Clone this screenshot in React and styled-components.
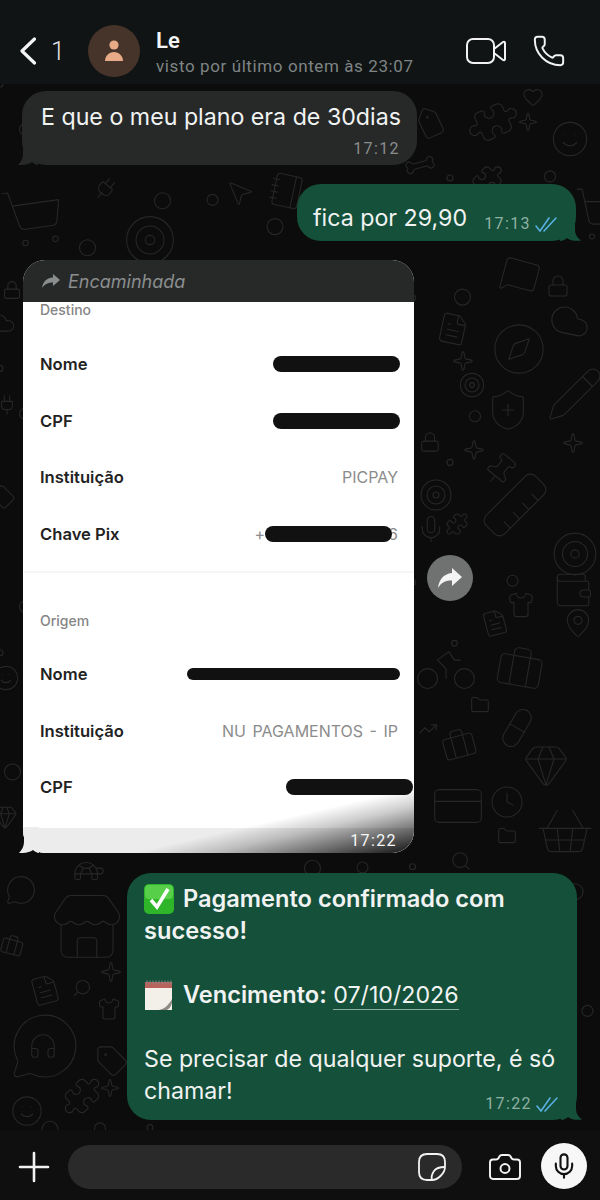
import React from "react";
import styled, { createGlobalStyle } from "styled-components";
import {
  Bike, Bone, Briefcase, Camera, Clock, Cloud, Compass, CreditCard, FileText, Folder, Gem,
  Headphones, Heart, Lock, MapPin, MessageCircle, MessageSquare, Mic, MousePointer2, Notebook, Pencil,
  Phone, Pill, Pin, Plug, Puzzle, Ruler, Search, ShieldPlus, Shirt, ShoppingBasket, ShoppingCart,
  Smile, Sparkle, Store, Tag, Target, TrendingUp, Turtle, Wallet,
} from "lucide-react";

const GlobalStyle = createGlobalStyle`
  html, body {
    margin: 0;
    padding: 0;
    background: #0c0c0c;
  }
`;

const Screen = styled.div`
  display: flex;
  flex-direction: column;
  width: 600px;
  height: 1200px;
  overflow: hidden;
  background: #0c0c0c;
  color: #f2f2f2;
  font-family: Inter, "Liberation Sans", sans-serif;
`;

const Header = styled.header`
  display: flex;
  align-items: center;
  flex: none;
  height: 84px;
  padding: 18px 34px 0 20px;
  box-sizing: border-box;
  background: #101414;
`;

const BackButton = styled.div`
  display: flex;
  align-items: center;
  gap: 15px;
  width: 68px;
  font-family: Roboto, sans-serif;
  font-size: 25px;
  font-weight: 300;
  color: #e4e4e4;
`;

const Avatar = styled.div`
  display: flex;
  align-items: center;
  justify-content: center;
  width: 52px;
  height: 52px;
  border-radius: 50%;
  background: #46342a;
`;

const Contact = styled.div`
  display: flex;
  flex-direction: column;
  flex: 1;
  margin-left: 16px;
`;

const ContactName = styled.div`
  height: 26px;
  font-family: Roboto, sans-serif;
  font-size: 22px;
  font-weight: 600;
  line-height: 28px;
  color: #f4f4f4;
`;

const LastSeen = styled.div`
  margin-top: 3px;
  font-family: Roboto, sans-serif;
  font-size: 17px;
  line-height: 20px;
  letter-spacing: 0.6px;
  white-space: nowrap;
  color: #7f8484;
`;

const HeaderActions = styled.div`
  display: flex;
  align-items: center;
  gap: 26px;
`;

const Chat = styled.main`
  position: relative;
  display: flex;
  flex-direction: column;
  flex: 1;
  padding-top: 7px;
  overflow: hidden;
`;

const Wallpaper = styled.svg`
  position: absolute;
  top: 0;
  left: 0;
  color: #262727;
`;

const Bubble = styled.div`
  position: relative;
  box-sizing: border-box;
  border-radius: 24px;
  background: ${p => (p.$sent ? "#14503a" : "#272929")};
  font-size: 23.2px;
  line-height: 32px;
  color: #f1f3f2;
`;

const ReceivedBubble = styled(Bubble)`
  align-self: flex-start;
  width: 395px;
  margin-left: 22px;
  padding: 10px 17px 6px 19px;
  white-space: nowrap;
`;

const PriceBubble = styled(Bubble)`
  display: flex;
  align-items: flex-end;
  justify-content: space-between;
  align-self: flex-end;
  width: 279px;
  height: 57px;
  margin: 19px 24px 0 0;
  padding: 11px 17px 7px 16px;
`;

const ConfirmBubble = styled(Bubble)`
  align-self: flex-end;
  width: 450px;
  height: 247px;
  margin: 20px 23px 0 0;
  padding: 10px 12px 0 17px;
`;

const Tail = styled.svg`
  position: absolute;
  bottom: 0;
  ${p => (p.$right ? "right: -8px;" : "left: -8px;")}
`;

const Meta = styled.div`
  display: flex;
  align-items: center;
  justify-content: flex-end;
  gap: 4px;
  margin-top: ${p => p.$gap || 0}px;
  font-family: Roboto, sans-serif;
  font-size: 16px;
  line-height: 20px;
  letter-spacing: 1.4px;
  color: ${p => (p.$sent ? "#8fb1a2" : "#8a8d8d")};
`;

const ConfirmMeta = styled(Meta)`
  position: absolute;
  right: 17px;
  bottom: 6px;
`;

const Strong = styled.b`
  font-size: 23.6px;
  font-weight: 600;
`;

const EmojiLine = styled.div`
  display: flex;
  align-items: center;
  gap: 9px;
  height: 32px;
`;

const DateLink = styled.span`
  border-bottom: 1px solid #8fb0a0;
  line-height: 24px;
`;

const Spacer = styled.div`
  height: 32px;
`;

const ForwardedCard = styled.section`
  position: relative;
  align-self: flex-start;
  width: 391px;
  height: 593px;
  margin: 19px 0 0 23px;
  border-radius: 22px;
  background: #ffffff;
`;

const ForwardedHead = styled.div`
  display: flex;
  align-items: center;
  gap: 8px;
  height: 42px;
  padding: 0 0 0 19px;
  border-radius: 22px 22px 0 0;
  background: #272929;
  font-size: 18px;
  font-style: italic;
  color: #8b8e8e;
`;

const Receipt = styled.div`
  position: relative;
  height: 526px;
  padding: 0 16px 0 17px;
  overflow: hidden;
  background: #ffffff;
`;

const SectionLabel = styled.div`
  margin-bottom: ${p => p.$gap}px;
  font-size: 14px;
  font-weight: 500;
  line-height: 16px;
  color: #858585;
`;

const Row = styled.div`
  display: flex;
  align-items: center;
  justify-content: space-between;
  height: 56.5px;
`;

const RowLabel = styled.span`
  font-size: 16.6px;
  font-weight: 600;
  color: #222222;
`;

const RowValue = styled.span`
  display: flex;
  align-items: center;
  font-size: 16px;
  word-spacing: 2px;
  color: #8c8c8c;
`;

const Redaction = styled.span`
  position: relative;
  display: block;
  width: ${p => p.$width}px;
  height: ${p => p.$height || 16}px;
  margin-right: ${p => p.$shift || 0}px;
  border-radius: 8px;
  background: #111111;
`;

const Divider = styled.div`
  height: 2px;
  margin: 9px -16px 40px -16px;
  background: #f5f5f5;
`;

const ImageFoot = styled.div`
  position: relative;
  display: flex;
  align-items: center;
  justify-content: flex-end;
  height: 25px;
  padding-right: 17px;
  border-radius: 0 0 22px 22px;
  background: #ececec;
  font-family: Roboto, sans-serif;
  font-size: 16px;
  letter-spacing: 1.4px;
  color: #f6f6f6;
`;

const Shade = styled.div`
  position: absolute;
  left: 0;
  right: 0;
  bottom: 0;
  height: 65px;
  border-radius: 0 0 22px 22px;
  background: linear-gradient(167deg, rgba(0, 0, 0, 0) 58%, rgba(0, 0, 0, 0.2) 70%, rgba(0, 0, 0, 0.92) 100%);
`;

const FootTime = styled.span`
  position: relative;
`;

const ForwardButton = styled.div`
  position: absolute;
  top: 295px;
  left: calc(100% + 13px);
  display: flex;
  align-items: center;
  justify-content: center;
  width: 46px;
  height: 46px;
  border-radius: 50%;
  background: #707171;
`;

const Composer = styled.footer`
  display: flex;
  align-items: center;
  flex: none;
  height: 70px;
  padding: 4px 13px 0 18px;
  box-sizing: border-box;
  background: #0f0f0f;
`;

const InputField = styled.div`
  display: flex;
  align-items: center;
  justify-content: flex-end;
  flex: 1;
  height: 44px;
  margin: 0 25px 0 18px;
  padding-right: 16px;
  border-radius: 22px;
  background: #2a2a2a;
`;

const MicButton = styled.div`
  display: flex;
  align-items: center;
  justify-content: center;
  width: 46px;
  height: 46px;
  margin: -2px 0 0 18px;
  border-radius: 50%;
  background: #f7f7f7;
`;

// doodles of the chat wallpaper: icon, x, y, size, rotation
const doodles = [
  [ShoppingCart, 0, 100, 66, -8], [Plug, 92, 92, 26, 40], [Target, 122, 128, 56, 0],
  [MousePointer2, 225, 94, 30, 0], [Notebook, 268, 88, 38, 12],
  [Bone, 405, 66, 30, 30], [Tag, 415, 25, 32, 20], [Puzzle, 470, 15, 46, 20], [Sparkle, 518, 28, 20, 0],
  [Smile, 550, 35, 40, 0], [Heart, 522, 2, 22, 0], [Puzzle, 470, 80, 34, 0], [ShoppingCart, 572, 100, 60, 0],
  [MessageSquare, 500, 172, 40, 15], [Lock, 546, 190, 24, 0], [Cloud, 548, 215, 44, 12],
  [FileText, 436, 228, 34, 12], [Sparkle, 452, 266, 22, 0], [Target, 458, 287, 28, 0],
  [Compass, 490, 236, 58, 0], [ShieldPlus, 485, 303, 46, 0], [Pencil, 545, 280, 60, 0],
  [Lock, 419, 347, 22, 0], [Sparkle, 463, 355, 22, 0], [Sparkle, 562, 348, 22, 0], [Pin, 482, 368, 36, 40],
  [Ruler, 478, 384, 74, 90], [Target, 418, 393, 36, 0], [Mic, 416, 430, 30, 0], [Puzzle, 445, 428, 24, 0],
  [Target, 550, 445, 50, 0], [Shirt, 507, 507, 28, 0], [FileText, 481, 525, 28, -15], [Wallet, 552, 485, 42, 0],
  [MapPin, 562, 523, 32, 0], [Bike, 412, 545, 68, 0], [Briefcase, 495, 560, 50, 10], [Folder, 470, 611, 20, 0],
  [Pill, 497, 624, 40, -15], [Briefcase, 441, 643, 36, -15], [TrendingUp, 418, 635, 20, 0], [Gem, 522, 657, 48, 0],
  [CreditCard, 430, 694, 56, 0], [Clock, 489, 700, 36, 0], [Folder, 497, 742, 20, 0], [ShoppingBasket, 534, 716, 62, 0],
  [Search, 450, 766, 22, 0], [MessageCircle, 5, 790, 32, 0], [Store, 48, 805, 78, 0], [Turtle, 72, 770, 34, 0],
  [Briefcase, 0, 850, 24, 15], [FileText, 29, 890, 32, -15], [Search, 72, 894, 20, 90], [Sparkle, 100, 877, 22, 0],
  [Shirt, 97, 913, 24, 0], [MessageCircle, 8, 925, 74, 0], [Headphones, 28, 947, 30, 0], [Tag, 95, 960, 34, 0],
  [Puzzle, 62, 992, 40, 0], [Sparkle, 100, 994, 20, 0], [Smile, 10, 1010, 34, 0],
  [Lock, 2, 196, 20, 0], [Cloud, -12, 225, 28, 0], [Tag, -10, 400, 26, 0], [Smile, -8, 580, 28, 0],
  [Gem, -8, 720, 26, 0], [Plug, -4, 310, 22, 0],
];

// little rings that fill the wallpaper, kept clear of the doodles
const rings = [];
for (let i = 0; i < 170; i++) {
  const cx = (i * 137.5) % 600;
  const cy = (i * 71.3) % 1046;
  const clear = !doodles.some(([, x, y, size]) => cx > x - 6 && cx < x + size + 6 && cy > y - 6 && cy < y + size + 6);
  if (clear) rings.push([cx, cy, 3 + (i % 3) * 2.5]);
}

const Doodles = () => (
  <Wallpaper width="600" height="1046" viewBox="0 0 600 1046" fill="none">
    {rings.map(([cx, cy, r], i) => (
      <circle key={i} cx={cx} cy={cy} r={r} stroke="currentColor" strokeWidth="1.1" />
    ))}
    {doodles.map(([Icon, x, y, size, rotate], i) => (
      <g key={i} transform={`rotate(${rotate} ${x + size / 2} ${y + size / 2})`}>
        <Icon x={x} y={y} width={size} height={size} strokeWidth={(1.1 * 24) / size} color="#262727" />
      </g>
    ))}
  </Wallpaper>
);

const ReadTicks = () => (
  <svg width="24" height="16" viewBox="0 0 24 16" fill="none" stroke="#59b0e0" strokeWidth="1.6" strokeLinecap="round">
    <path d="M1 10l4 5L14 2" />
    <path d="M9 15L21 2" />
  </svg>
);

const LeftTail = ({ color }) => (
  <Tail width="24" height="26" viewBox="0 0 24 26">
    <path d="M9 0v15c0 4-2 8-5 11 5 .3 11-.6 14-3 2 1.700 4 2.700 6 3V0z" fill={color} />
  </Tail>
);

const RightTail = ({ color }) => (
  <Tail $right width="24" height="26" viewBox="0 0 24 26">
    <path d="M15 0v15c0 4 2 8 6 10.500-5 .8-11 .1-14-2.500-2 1.700-4 2.700-7 3V0z" fill={color} />
  </Tail>
);

const CheckEmoji = () => (
  <svg width="30" height="30" viewBox="0 0 30 30">
    <rect width="30" height="30" rx="5" fill="#2fb52a" />
    <rect x="1" y="1" width="28" height="14" rx="4" fill="#57cf48" />
    <path d="M7 16l6 7L24 5" fill="none" stroke="#fff" strokeWidth="3.6" />
  </svg>
);

const CalendarEmoji = () => (
  <svg width="30" height="32" viewBox="0 0 30 32">
    <rect x="1" y="3" width="27" height="28" fill="#f3efe9" />
    <rect x="1" y="3" width="27" height="6" fill="#b9615a" />
    <path d="M3 1.500v4M6 1.500v4M9 1.500v4M12 1.500v4M15 1.500v4M18 1.500v4M21 1.500v4M24 1.500v4M27 1.500v4" stroke="#888" strokeWidth="1" />
    <path d="M15 31c5-1 10-5 13-11v4c-1 3-2 5-5 7z" fill="#8d8a85" />
  </svg>
);

const App = () => (
  <Screen>
    <GlobalStyle />
    <Header>
      <BackButton>
        <svg width="16" height="28" viewBox="0 0 16 28" fill="none" stroke="#f4f4f4" strokeWidth="3.2" strokeLinecap="round" strokeLinejoin="round">
          <path d="M14.500 2L2 14l12.500 12" />
        </svg>
        1
      </BackButton>
      <Avatar>
        <svg width="20" height="22" viewBox="0 0 20 22" fill="#e9ab87">
          <circle cx="10" cy="5" r="4.600" />
          <path d="M1 21c0-5 4-9 9-9s9 4 9 9z" />
        </svg>
      </Avatar>
      <Contact>
        <ContactName>Le</ContactName>
        <LastSeen>visto por último ontem às 23:07</LastSeen>
      </Contact>
      <HeaderActions>
        <svg width="40" height="26" viewBox="0 0 40 26" fill="none" stroke="#f2f2f2" strokeWidth="2" strokeLinejoin="round">
          <rect x="1" y="1" width="27" height="24" rx="6" />
          <path d="M28 11l9-7c1-.7 2 0 2 1v16c0 1-1 1.700-2 1l-9-7z" />
        </svg>
        <Phone size={34} strokeWidth={1.4} color="#f2f2f2" />
      </HeaderActions>
    </Header>

    <Chat>
      <Doodles />
      <ReceivedBubble>
        E que o meu plano era de 30dias
        <Meta $gap={6}>17:12</Meta>
        <LeftTail color="#272929" />
      </ReceivedBubble>

      <PriceBubble $sent>
        fica por 29,90
        <Meta $sent>
          17:13
          <ReadTicks />
        </Meta>
        <RightTail color="#14503a" />
      </PriceBubble>

      <ForwardedCard>
        <ForwardedHead>
          <svg width="18" height="14" viewBox="0 0 18 14" fill="#8b8e8e">
            <path d="M11 0l7 6-7 6V8.500C6 8.500 3 10 0 14 1 8 4 4 11 3.500z" />
          </svg>
          Encaminhada
        </ForwardedHead>
        <Receipt>
          <SectionLabel $gap={18}>Destino</SectionLabel>
          <Row>
            <RowLabel>Nome</RowLabel>
            <Redaction $width={127} $shift={-2} />
          </Row>
          <Row>
            <RowLabel>CPF</RowLabel>
            <Redaction $width={127} $shift={-2} />
          </Row>
          <Row>
            <RowLabel>Instituição</RowLabel>
            <RowValue>PICPAY</RowValue>
          </Row>
          <Row>
            <RowLabel>Chave Pix</RowLabel>
            <RowValue>
              +<Redaction $width={127} $shift={-4} />6
            </RowValue>
          </Row>
          <Divider />
          <SectionLabel $gap={17}>Origem</SectionLabel>
          <Row>
            <RowLabel>Nome</RowLabel>
            <Redaction $width={213} $height={12} $shift={-2} />
          </Row>
          <Row>
            <RowLabel>Instituição</RowLabel>
            <RowValue>NU PAGAMENTOS - IP</RowValue>
          </Row>
          <Row>
            <RowLabel>CPF</RowLabel>
            <Redaction $width={127} $shift={-15} />
          </Row>
        </Receipt>
        <ImageFoot>
          <Shade />
          <FootTime>17:22</FootTime>
        </ImageFoot>
        <LeftTail color="#ececec" />
        <ForwardButton>
          <svg width="24" height="20" viewBox="0 0 24 20" fill="#f4f4f4">
            <path d="M14 0l10 9-10 9v-5.500C8 12.500 3.500 14 0 20 1 12 5 6 14 5z" />
          </svg>
        </ForwardButton>
      </ForwardedCard>

      <ConfirmBubble $sent>
        <EmojiLine>
          <CheckEmoji />
          <Strong>Pagamento confirmado com</Strong>
        </EmojiLine>
        <Strong>sucesso!</Strong>
        <Spacer />
        <EmojiLine>
          <CalendarEmoji />
          <span>
            <Strong>Vencimento:</Strong> <DateLink>07/10/2026</DateLink>
          </span>
        </EmojiLine>
        <Spacer />
        <div>Se precisar de qualquer suporte, é só</div>
        <div>chamar!</div>
        <ConfirmMeta $sent>
          17:22
          <ReadTicks />
        </ConfirmMeta>
        <RightTail color="#14503a" />
      </ConfirmBubble>
    </Chat>

    <Composer>
      <svg width="32" height="32" viewBox="0 0 32 32" stroke="#f2f2f2" strokeWidth="2.600" strokeLinecap="round">
        <path d="M16 2v28M2 16h28" />
      </svg>
      <InputField>
        <svg width="28" height="28" viewBox="0 0 28 28" fill="none" stroke="#f2f2f2" strokeWidth="1.800" strokeLinejoin="round">
          <path d="M9 1h10c5 0 8 3 8 8v5c0 6-7 13-13 13H9c-5 0-8-3-8-8V9c0-5 3-8 8-8z" />
          <path d="M14 27c-1-3 0-6 2-9 2-3 6-4 11-4" />
        </svg>
      </InputField>
      <Camera size={36} strokeWidth={1.3} color="#f2f2f2" />
      <MicButton>
        <Mic size={28} strokeWidth={1.8} color="#111" />
      </MicButton>
    </Composer>
  </Screen>
);

export default App;
